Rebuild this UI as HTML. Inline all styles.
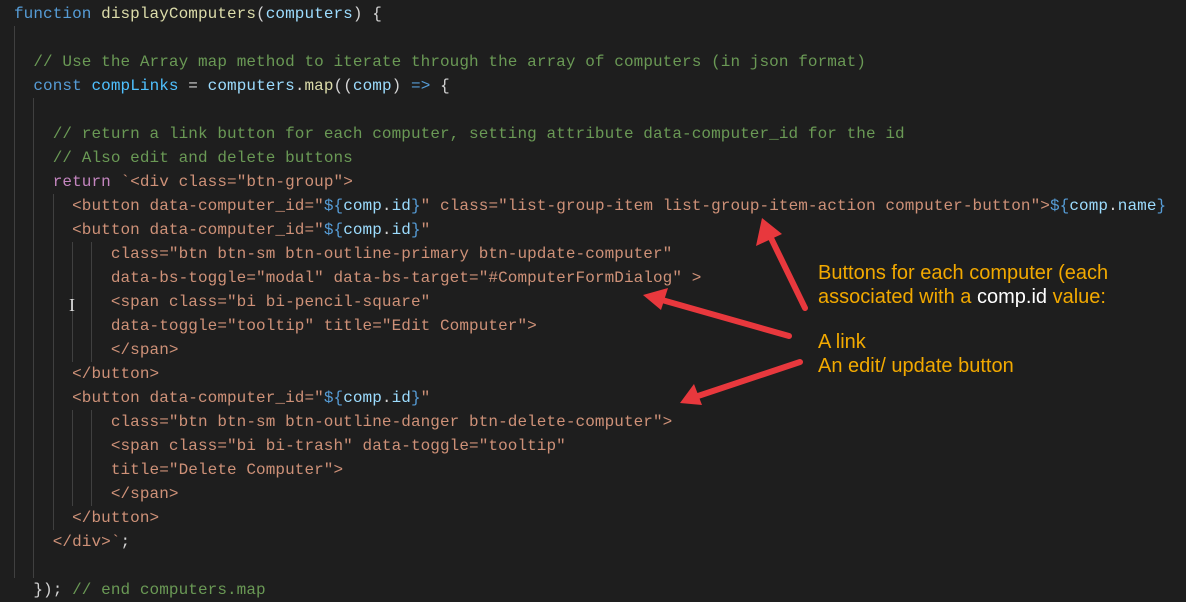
<!DOCTYPE html>
<html><head><meta charset="utf-8"><style>
body{margin:0;background:#1e1e1e;width:1186px;height:599px;overflow:hidden;position:relative}
.code{position:absolute;left:14px;top:2px;font-family:"Liberation Mono",monospace;font-size:16px;letter-spacing:0.08px;line-height:24px;color:#d4d4d4;white-space:pre}
.k{color:#569cd6}.f{color:#dcdcaa}.v{color:#9cdcfe}.c{color:#6a9955}.s{color:#ce9178}.r{color:#c586c0}.fv{color:#4fc1ff}
.g{position:absolute;width:1px;background:#404040}
.ann{position:absolute;left:818px;font-family:"Liberation Sans",Arial,sans-serif;font-size:20px;color:#f2a900;line-height:24px}
</style></head><body>
<div class="g" style="left:14px;top:26px;height:552px"></div>
<div class="g" style="left:33px;top:98px;height:480px"></div>
<div class="g" style="left:53px;top:194px;height:336px"></div>
<div class="g" style="left:72px;top:242px;height:120px"></div>
<div class="g" style="left:91px;top:242px;height:120px"></div>
<div class="g" style="left:72px;top:410px;height:96px"></div>
<div class="g" style="left:91px;top:410px;height:96px"></div>
<div class="code"><span class="k">function</span> <span class="f">displayComputers</span>(<span class="v">computers</span>) {

  <span class="c">// Use the Array map method to iterate through the array of computers (in json format)</span>
  <span class="k">const</span> <span class="fv">compLinks</span> = <span class="v">computers</span>.<span class="f">map</span>((<span class="v">comp</span>) <span class="k">=&gt;</span> {

    <span class="c">// return a link button for each computer, setting attribute data-computer_id for the id</span>
    <span class="c">// Also edit and delete buttons</span>
    <span class="r">return</span> <span class="s">`&lt;div class="btn-group"&gt;</span>
<span class="s">      &lt;button data-computer_id="</span><span class="k">${</span><span class="v">comp</span>.<span class="v">id</span><span class="k">}</span><span class="s">" class="list-group-item list-group-item-action computer-button"&gt;</span><span class="k">${</span><span class="v">comp</span>.<span class="v">name</span><span class="k">}</span>
<span class="s">      &lt;button data-computer_id="</span><span class="k">${</span><span class="v">comp</span>.<span class="v">id</span><span class="k">}</span><span class="s">"</span>
<span class="s">          class="btn btn-sm btn-outline-primary btn-update-computer"</span>
<span class="s">          data-bs-toggle="modal" data-bs-target="#ComputerFormDialog" &gt;</span>
<span class="s">          &lt;span class="bi bi-pencil-square"</span>
<span class="s">          data-toggle="tooltip" title="Edit Computer"&gt;</span>
<span class="s">          &lt;/span&gt;</span>
<span class="s">      &lt;/button&gt;</span>
<span class="s">      &lt;button data-computer_id="</span><span class="k">${</span><span class="v">comp</span>.<span class="v">id</span><span class="k">}</span><span class="s">"</span>
<span class="s">          class="btn btn-sm btn-outline-danger btn-delete-computer"&gt;</span>
<span class="s">          &lt;span class="bi bi-trash" data-toggle="tooltip"</span>
<span class="s">          title="Delete Computer"&gt;</span>
<span class="s">          &lt;/span&gt;</span>
<span class="s">      &lt;/button&gt;</span>
<span class="s">    &lt;/div&gt;`</span>;

  }); <span class="c">// end computers.map</span></div>
<div style="position:absolute;left:69px;top:295px;color:#ddd;font:18px 'Liberation Serif',serif">I</div>
<div class="ann" style="top:261px">Buttons for each computer (each<br>associated with a <span style="color:#fff">comp.id</span> value:</div>
<div class="ann" style="top:330px">A link<br>An edit/ update button</div>
<svg width="1186" height="599" style="position:absolute;left:0;top:0">
<g stroke="#e8383d" stroke-width="6" stroke-linecap="round" fill="#e8383d">
<line x1="805" y1="308" x2="770" y2="236"/>
<line x1="789" y1="336" x2="662" y2="300"/>
<line x1="800" y1="362" x2="698" y2="396"/>
</g>
<g fill="#e8383d">
<polygon points="762,218 756,246 782,234"/>
<polygon points="643,295 668,288 661,310"/>
<polygon points="680,403 694,384 702,405"/>
</g>
</svg>
</body></html>
